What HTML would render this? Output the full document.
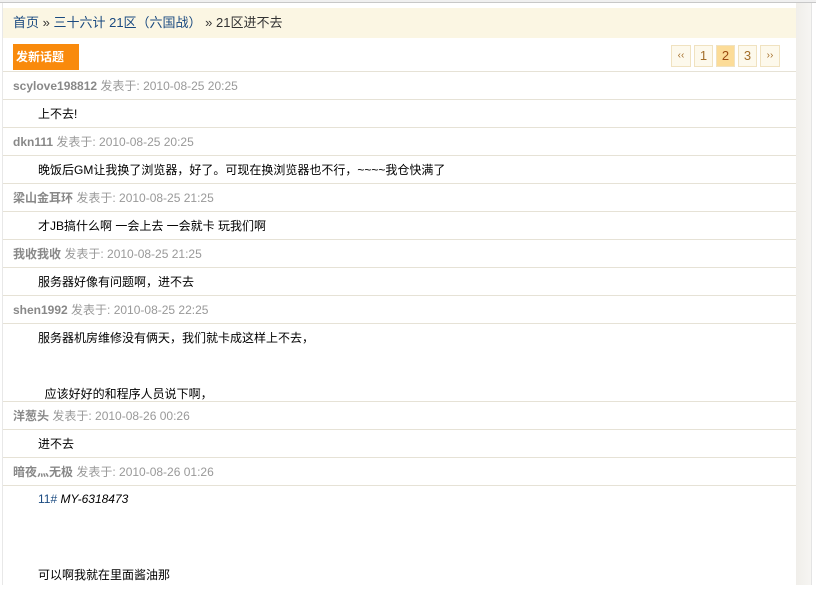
<!DOCTYPE html>
<html><head><meta charset="utf-8"><style>
*{margin:0;padding:0;box-sizing:border-box}
body{width:816px;height:585px;overflow:hidden;background:#fff;font-family:"Liberation Sans","Noto Sans CJK SC",sans-serif;font-size:12px;position:relative}
.top{position:absolute;left:0;top:0;width:816px;height:3px;border-bottom:1px solid #c8c8c8;background:#f0f0f0}
.side{position:absolute;left:796px;top:3px;width:16px;height:582px;background:linear-gradient(90deg,#f0eeea,#f6f5f2);border-right:1px solid #e4e4e4}
.lb{position:absolute;left:2px;top:3px;width:1px;height:582px;background:#e8e8e8}
.crumb{position:absolute;left:3px;top:8px;width:793px;height:30px;background:#fbf6e3;font-size:13px;line-height:30px;padding-left:10px;color:#333}
.crumb a{color:#1a4a80}
.btn{position:absolute;left:13px;top:44px;width:66px;height:26px;background:#f98a0c;color:#fff;font-weight:bold;font-size:12px;line-height:26px;padding-left:3px}
.pg{position:absolute;top:45px;height:22px;border:1px solid #f0e2c0;background:#fdf9ec;color:#a36e2a;text-align:center;line-height:20px;font-size:13px}
.pg.c{background:#fcdc98;color:#9a4a10}
.row{position:absolute;left:3px;width:793px;border-top:1px solid #e6e2d6}
.h{height:28px;line-height:28px;padding-left:10px;color:#999;font-size:12px}
.h b{color:#888}
.c2{height:28px;line-height:28px;padding-left:35px;color:#000}
</style></head><body>
<div class="top"></div><div class="side"></div><div class="lb"></div>
<div class="crumb"><a>首页</a> » <a>三十六计 21区（六国战）</a> » 21区进不去</div>
<div class="btn">发新话题</div>
<div class="pg" style="left:671px;width:20px;font-size:10px">‹‹</div>
<div class="pg" style="left:694px;width:19px">1</div>
<div class="pg c" style="left:716px;width:19px">2</div>
<div class="pg" style="left:738px;width:19px">3</div>
<div class="pg" style="left:760px;width:20px;font-size:10px">››</div>

<div class="row h" style="top:71px"><b>scylove198812</b> 发表于: 2010-08-25 20:25</div>
<div class="row c2" style="top:99px">上不去!</div>
<div class="row h" style="top:127px"><b>dkn111</b> 发表于: 2010-08-25 20:25</div>
<div class="row c2" style="top:155px">晚饭后GM让我换了浏览器，好了。可现在换浏览器也不行，~~~~我仓快满了</div>
<div class="row h" style="top:183px"><b>梁山金耳环</b> 发表于: 2010-08-25 21:25</div>
<div class="row c2" style="top:211px">才JB搞什么啊 一会上去 一会就卡 玩我们啊</div>
<div class="row h" style="top:239px"><b>我收我收</b> 发表于: 2010-08-25 21:25</div>
<div class="row c2" style="top:267px">服务器好像有问题啊，进不去</div>
<div class="row h" style="top:295px"><b>shen1992</b> 发表于: 2010-08-25 22:25</div>
<div class="row c2" style="top:323px;height:78px">服务器机房维修没有俩天，我们就卡成这样上不去，<br><br>&nbsp;&nbsp;应该好好的和程序人员说下啊，</div>
<div class="row h" style="top:401px"><b>洋葱头</b> 发表于: 2010-08-26 00:26</div>
<div class="row c2" style="top:429px">进不去</div>
<div class="row h" style="top:457px"><b>暗夜灬无极</b> 发表于: 2010-08-26 01:26</div>
<div class="row c2" style="top:485px;height:100px;line-height:26px"><span style="color:#1a4a80">11#</span> <i>MY-6318473</i><br><br><br><span style="position:relative;top:-2px">可以啊我就在里面酱油那</span></div>
</body></html>
